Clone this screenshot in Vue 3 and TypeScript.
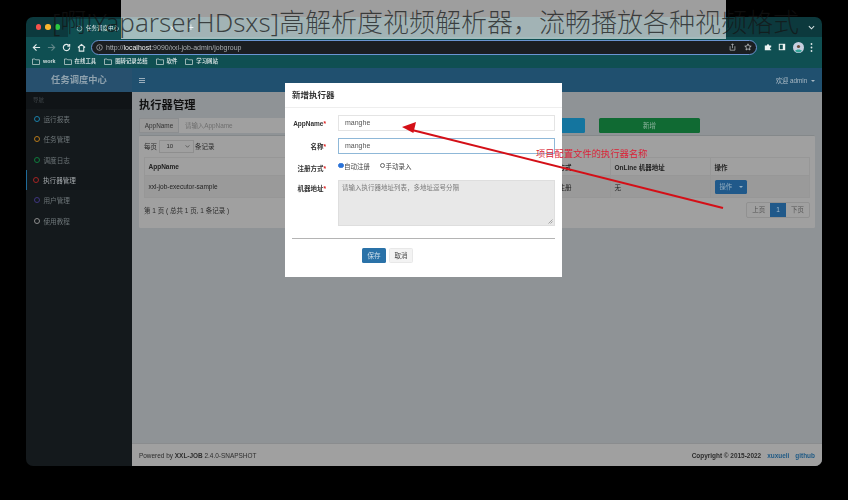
<script setup lang="ts">
const bookmarks: string[] = ['work', '在线工具', '圈转记录总结', '软件', '学习网站']
const menu: { label: string; color: string; active?: boolean }[] = [
  { label: '运行报表', color: '#1a7fa8' },
  { label: '任务管理', color: '#b5781a' },
  { label: '调度日志', color: '#0f7a3c' },
  { label: '执行器管理', color: '#a32424', active: true },
  { label: '用户管理', color: '#3e3580' },
  { label: '使用教程', color: '#8c8c8c' }
]
</script>

<template>
  <div class="page">
    <div class="window">
      <div class="tabs">
        <div class="lights">
          <i class="light red"></i><i class="light amber"></i><i class="light green"></i>
        </div>
        <div class="tab">
          <svg class="favicon" width="7" height="7" viewBox="0 0 10 10"><circle cx="5" cy="5" r="3.6" fill="none" stroke="#8fb0b0" stroke-width="1.4"/></svg>
          <span class="tab-title">任务调度中心</span>
          <span class="tab-close">×</span>
        </div>
        <span class="tab-new">+</span>
        <svg class="tab-chevron" width="7" height="5" viewBox="0 0 8 5"><path d="M1 1l3 3 3-3" fill="none" stroke="#d5e0e0" stroke-width="1.2"/></svg>
      </div>

      <div class="toolbar">
        <svg class="nav" width="9" height="9" viewBox="0 0 10 10"><path d="M9 5H2M5 1.5L1.5 5 5 8.5" fill="none" stroke="#dfe8e8" stroke-width="1.3"/></svg>
        <svg class="nav" width="9" height="9" viewBox="0 0 10 10"><path d="M1 5h7M5 1.5L8.500 5 5 8.500" fill="none" stroke="#5f8688" stroke-width="1.3"/></svg>
        <svg class="nav" width="9" height="9" viewBox="0 0 10 10"><path d="M8.500 5a3.500 3.500 0 1 1-1-2.500M8.500 1v2.500H6" fill="none" stroke="#dfe8e8" stroke-width="1.3"/></svg>
        <svg class="nav last" width="9" height="9" viewBox="0 0 10 10"><path d="M1 5l4-3.500L9 5M2.500 4.500V9h5V4.500" fill="none" stroke="#dfe8e8" stroke-width="1.2"/></svg>
        <div class="url">
          <svg width="7" height="7" viewBox="0 0 10 10"><circle cx="5" cy="5" r="4" fill="none" stroke="#b8bcbf" stroke-width="1"/><path d="M5 4.500v2.500M5 2.800v.8" stroke="#b8bcbf" stroke-width="1"/></svg>
          <span class="url-text">http://<b>localhost</b>:9090/xxl-job-admin/jobgroup</span>
          <svg class="url-end" width="7" height="8" viewBox="0 0 8 10"><path d="M1 4v5h6V4M4 6.500V1M2.500 2.500L4 1l1.500 1.500" fill="none" stroke="#b8bcbf" stroke-width=".9"/></svg>
          <svg width="8" height="8" viewBox="0 0 10 10"><path d="M5 1l1.200 2.700 2.800.3-2.100 1.900.6 2.900L5 7.300 2.500 8.800l.6-2.900L1 4l2.800-.3z" fill="none" stroke="#d5d8da" stroke-width=".9"/></svg>
        </div>
        <div class="actions">
          <svg width="8" height="8" viewBox="0 0 10 10"><path d="M1 3h2.500a1.500 1.500 0 0 1 3 0H9v2.200a1.500 1.500 0 0 0 0 3V9H1z" fill="#eef3f3"/></svg>
          <svg width="8" height="8" viewBox="0 0 10 10"><rect x="1" y="1" width="8" height="8" fill="#eef3f3"/><rect x="2.200" y="2.200" width="3.800" height="5.600" fill="#0f4f52"/></svg>
          <svg width="11" height="11" viewBox="0 0 11 11"><circle cx="5.500" cy="5.500" r="5.500" fill="#c8cfe0"/><path d="M2 9c1-2 6-2 7 0a5 5 0 0 1-7 0z" fill="#35a59a"/><circle cx="5.500" cy="4.500" r="1.600" fill="#6b4a3a"/></svg>
          <svg width="3" height="9" viewBox="0 0 3 9"><circle cx="1.500" cy="1" r=".9" fill="#dfe8e8"/><circle cx="1.500" cy="4.500" r=".9" fill="#dfe8e8"/><circle cx="1.500" cy="8" r=".9" fill="#dfe8e8"/></svg>
        </div>
      </div>

      <div class="bookmarks">
        <span v-for="b in bookmarks" :key="b" class="bookmark">
          <svg width="8" height="7" viewBox="0 0 8 7"><path d="M.5 1h2.500l.7.800h3.800v4.700H.5z" fill="none" stroke="#b9cccc" stroke-width=".8"/></svg>
          {{ b }}
        </span>
      </div>

      <div class="app">
        <aside class="sidebar">
          <div class="brand">任务调度中心</div>
          <div class="nav-title">导航</div>
          <ul class="menu">
            <li v-for="m in menu" :key="m.label" class="menu-item" :class="{ active: m.active }">
              <i class="dot" :style="{ borderColor: m.color }"></i>{{ m.label }}
            </li>
          </ul>
        </aside>

        <main class="main">
          <header class="navbar">
            <svg width="6" height="5" viewBox="0 0 6 5"><path d="M0 .5h6M0 2.500h6M0 4.500h6" stroke="#a9b9c4" stroke-width=".9"/></svg>
            <span class="welcome">欢迎 admin <i class="caret"></i></span>
          </header>

          <section class="content">
            <h1 class="title">执行器管理</h1>
            <div class="search">
              <div class="group">
                <span class="addon">AppName</span>
                <span class="field">请输入AppName</span>
              </div>
              <div class="group-spacer"></div>
              <button class="btn-search">搜索</button>
              <button class="btn-add">新增</button>
            </div>

            <div class="box">
              <div class="length">
                每页
                <span class="select">10 <svg width="5" height="3" viewBox="0 0 6 4"><path d="M.5.500L3 3 5.500.500" fill="none" stroke="#333" stroke-width=".8"/></svg></span>
                条记录
              </div>
              <table class="table">
                <colgroup>
                  <col class="c1" /><col class="c2" /><col class="c3" /><col />
                </colgroup>
                <thead>
                  <tr><th>AppName</th><th>注册方式</th><th>OnLine 机器地址</th><th>操作</th></tr>
                </thead>
                <tbody>
                  <tr>
                    <td>xxl-job-executor-sample</td>
                    <td>自动注册</td>
                    <td>无</td>
                    <td><span class="op"><span>操作</span><i class="caret"></i></span></td>
                  </tr>
                </tbody>
              </table>
              <div class="foot-row">
                <span>第 1 页 ( 总共 1 页, 1 条记录 )</span>
                <span class="pager">
                  <span>上页</span><span class="current">1</span><span>下页</span>
                </span>
              </div>
            </div>
          </section>

          <footer class="footer">
            <span>Powered by <b>XXL-JOB</b> 2.4.0-SNAPSHOT</span>
            <span class="copy"><b>Copyright © 2015-2022</b><b class="link">xuxueli</b><b class="link">github</b></span>
          </footer>
        </main>
      </div>
    </div>

    <div class="modal">
      <div class="modal-head">新增执行器</div>
      <div class="modal-body">
        <div class="row">
          <label class="lbl">AppName<em>*</em></label>
          <div class="input">manghe</div>
        </div>
        <div class="row">
          <label class="lbl">名称<em>*</em></label>
          <div class="input focus">manghe</div>
        </div>
        <div class="row radios">
          <label class="lbl">注册方式<em>*</em></label>
          <span class="radio on"></span><span class="radio-text">自动注册</span>
          <span class="radio"></span><span class="radio-text">手动录入</span>
        </div>
        <div class="row area-row">
          <label class="lbl">机器地址<em>*</em></label>
          <div class="area">请输入执行器地址列表，多地址逗号分隔
            <svg class="grip" width="5" height="5" viewBox="0 0 5 5"><path d="M.5 4.500L4.500.5M2.500 4.500l2-2" stroke="#777" stroke-width=".6"/></svg>
          </div>
        </div>
        <div class="rule"></div>
        <div class="modal-btns">
          <span class="save">保存</span>
          <span class="cancel">取消</span>
        </div>
      </div>
    </div>

    <span class="note">项目配置文件的执行器名称</span>
    <svg class="arrow" width="848" height="500" viewBox="0 0 848 500">
      <path d="M723 208L412 130" stroke="#d40f17" stroke-width="2" fill="none"/>
      <path d="M402 127l14-5-2.600 11z" fill="#d40f17"/>
    </svg>

    <div class="band"></div>
    <div class="caption">[啊!YaparserHDsxs]高解析度视频解析器，流畅播放各种视频格式</div>
  </div>
</template>

<style>
body { margin: 0; background: #000; }
</style>

<style scoped>
.page {
  position: relative;
  width: 848px;
  height: 500px;
  box-sizing: border-box;
  padding: 17px 26px 34px;
  overflow: hidden;
  background: #000;
  font-family: "Liberation Sans", "Noto Sans CJK SC", sans-serif;
}
.window {
  display: flex;
  flex-direction: column;
  height: 449px;
  border-radius: 7px;
  overflow: hidden;
  filter: blur(0.45px);
}
.tabs {
  display: flex;
  align-items: center;
  height: 20px;
  flex: none;
  background: #0c393d;
  color: #dfe8e8;
}
.lights { display: flex; gap: 4px; width: 42px; padding-left: 9.500px; box-sizing: border-box; }
.light { width: 5.500px; height: 5.500px; border-radius: 50%; }
.red { background: #f5524c; }
.amber { background: #f6b52e; }
.green { background: #2bc840; }
.tab {
  display: flex;
  align-items: center;
  align-self: flex-end;
  gap: 3px;
  width: 112px;
  height: 18px;
  box-sizing: border-box;
  padding: 0 5px 0 8px;
  background: #0f4f52;
  border-radius: 5px 5px 0 0;
  font-size: 5.500px;
}
.tab-title { flex: 1; margin-left: 0; }
.tab-close { font-size: 9px; line-height: 1; }
.tab-new { margin-left: 8px; font-size: 10px; }
.tab-chevron { margin-left: auto; margin-right: 7px; }
.toolbar {
  display: flex;
  align-items: center;
  height: 20px;
  flex: none;
  box-sizing: border-box;
  padding-left: 6px;
  background: #0f4f52;
}
.nav { margin-right: 6px; }
.nav.last { margin-right: 5px; }
.url {
  display: flex;
  align-items: center;
  gap: 3px;
  width: 666px;
  height: 15px;
  box-sizing: border-box;
  padding: 0 4px;
  background: #1b1e21;
  border: 1px solid #6a95d2;
  border-radius: 8px;
  color: #a9adb0;
  font-size: 7px;
}
.url b { color: #f0f2f3; font-weight: 400; }
.url-text { flex: 1; }
.url-end { margin-right: 5px; }
.actions { display: flex; flex: 1; align-items: center; justify-content: space-between; padding: 0 9px 0 7px; }
.bookmarks {
  display: flex;
  gap: 8px;
  height: 11px;
  flex: none;
  padding-left: 6px;
  background: #0f4f52;
  color: #d3dfdf;
  font-size: 5.400px;
  font-weight: 700;
  line-height: 7px;
}
.bookmark { display: flex; gap: 3px; height: 7px; margin-top: 1px; }
.app { display: flex; flex: 1; min-height: 0; }
.sidebar { width: 106px; flex: none; background: #14191c; }
.brand {
  height: 24px;
  background: #27506e;
  color: #8fa2ae;
  font-size: 9.300px;
  font-weight: 700;
  line-height: 24px;
  text-align: center;
}
.nav-title {
  height: 17px;
  padding-left: 7px;
  background: #101417;
  color: #40474b;
  font-size: 5.500px;
  line-height: 16px;
}
.menu { margin: 0; padding: 0; list-style: none; }
.menu-item {
  display: flex;
  align-items: center;
  gap: 4px;
  height: 20.300px;
  box-sizing: border-box;
  padding-left: 7.500px;
  color: #6e7679;
  font-size: 6.600px;
}
.menu-item.active {
  padding-left: 6px;
  border-left: 1.500px solid #1f6a98;
  background: #12171a;
  color: #a4a9ac;
}
.dot { width: 4px; height: 4px; border: 1.200px solid; border-radius: 50%; }
.main { display: flex; flex: 1; flex-direction: column; min-width: 0; background: #8f9396; }
.navbar {
  display: flex;
  align-items: center;
  justify-content: space-between;
  height: 24px;
  flex: none;
  box-sizing: border-box;
  padding: 0 7px;
  background: #20506f;
  color: #a9b9c4;
}
.welcome { font-size: 6.300px; }
.caret {
  display: inline-block;
  width: 0;
  height: 0;
  margin-left: 2px;
  vertical-align: middle;
  border-top: 2px solid currentColor;
  border-left: 2px solid transparent;
  border-right: 2px solid transparent;
}
.content { flex: 1; box-sizing: border-box; padding: 0 7px; }
.title {
  height: 26px;
  margin: 0;
  color: #111;
  font-size: 11.300px;
  font-weight: 700;
  line-height: 26px;
}
.search { display: flex; height: 15px; font-size: 6.400px; color: #444; }
.group { display: flex; width: 345px; }
.group-spacer { flex: 1; }
.addon {
  width: 40px;
  background: #9a9a9a;
  border: 1px solid #8c8e90;
  box-sizing: border-box;
  line-height: 13px;
  text-align: center;
  color: #333;
}
.field {
  flex: 1;
  padding-left: 6px;
  background: #a0a0a0;
  color: #6f6f6f;
  line-height: 15px;
}
.btn-search, .btn-add {
  width: 101px;
  height: 15px;
  padding: 0;
  border: 0;
  border-radius: 1.500px;
  font: inherit;
  color: #8fb5a0;
}
.btn-search { margin-right: 14px; background: #14759f; }
.btn-add { margin-right: 115px; background: #106a33; }
.box {
  height: 93px;
  margin-top: 2px;
  box-sizing: border-box;
  padding: 0 5px;
  background: #a0a0a0;
  border-top: 1.500px solid #84888a;
  border-radius: 1.500px;
  color: #2c2c2c;
  font-size: 6.500px;
}
.length { display: flex; align-items: center; gap: 1.500px; height: 20px; }
.select {
  display: flex;
  align-items: center;
  justify-content: space-between;
  width: 35px;
  height: 13px;
  box-sizing: border-box;
  padding: 0 3px 0 7px;
  border: 1px solid #8e8e8e;
  font-size: 6px;
}
.table {
  width: 666px;
  margin-top: 1px;
  table-layout: fixed;
  border-collapse: collapse;
  color: #222;
}
.c1 { width: 397px; }
.c2 { width: 69px; }
.c3 { width: 100px; }
.table th, .table td {
  padding: 0 3.500px;
  border: 1px solid #979797;
  text-align: left;
  white-space: nowrap;
}
.table th { height: 17px; font-weight: 700; }
.table td { height: 21px; background: #9a9a9a; }
.op {
  display: flex;
  align-items: center;
  justify-content: space-between;
  width: 32px;
  height: 14px;
  box-sizing: border-box;
  padding: 0 4px 0 5px;
  background: #20598a;
  border-radius: 1.500px;
  color: #96b0c2;
  font-size: 6.300px;
}
.foot-row { display: flex; align-items: center; justify-content: space-between; height: 24px; }
.pager {
  display: flex;
  width: 64px;
  height: 16px;
  box-sizing: border-box;
  border: 1px solid #919191;
  border-radius: 2px;
  color: #555;
  line-height: 14px;
  text-align: center;
  font-size: 6.500px;
}
.pager span { flex: 24; }
.pager .current { flex: 16; background: #20598a; color: #a8bfd0; }
.footer {
  display: flex;
  align-items: center;
  justify-content: space-between;
  height: 23px;
  flex: none;
  box-sizing: border-box;
  padding: 0 7px;
  background: #a0a0a0;
  border-top: 1px solid #8a8c8e;
  color: #2c2c2c;
  font-size: 6.450px;
}
.copy { display: flex; gap: 6px; }
.link { color: #1f5a85; }

.modal {
  position: absolute;
  left: 285px;
  top: 83px;
  width: 277px;
  height: 194px;
  background: #fff;
  filter: blur(0.4px);
  color: #333;
  font-size: 6.500px;
}
.modal-head {
  height: 25px;
  box-sizing: border-box;
  padding-left: 7px;
  border-bottom: 1px solid #eee;
  font-size: 8.500px;
  font-weight: 700;
  line-height: 24px;
}
.modal-body { padding: 7px 7px 0; }
.row { display: flex; align-items: center; height: 16px; margin-bottom: 7px; }
.lbl { width: 34px; margin-right: 12px; flex: none; text-align: right; font-weight: 700; white-space: nowrap; }
.lbl em { color: #e02020; font-style: normal; }
.input {
  width: 218px;
  height: 16px;
  box-sizing: border-box;
  padding-left: 6px;
  border: 1px solid #e4e4e4;
  font-size: 7px;
  line-height: 14px;
  color: #555;
}
.input.focus { border-color: #8fb8d8; }
.radios { height: 11px; margin-bottom: 9px; margin-top: -1px; }
.radios .lbl { padding-top: 4px; }
.radio {
  width: 5.500px;
  height: 5.500px;
  box-sizing: border-box;
  border: .8px solid #666;
  border-radius: 50%;
}
.radio.on { border: 1.500px solid #2a72d8; background: #2a72d8; }
.radio-text { margin: 0 9.500px 0 .5px; color: #444; }
.area-row { align-items: flex-start; height: 46px; margin-bottom: 0; }
.area-row .lbl { padding-top: 3px; }
.area {
  position: relative;
  width: 218px;
  height: 46px;
  box-sizing: border-box;
  padding: 1px 3px;
  background: #e8e8e8;
  border: 1px solid #dedede;
  color: #7a7a7a;
}
.grip { position: absolute; right: 1px; bottom: 1px; }
.rule { height: 1px; margin-top: 12px; background: #b4b4b4; }
.modal-btns { display: flex; gap: 3px; margin: 9px 0 0 70px; }
.save, .cancel {
  width: 24px;
  height: 15px;
  box-sizing: border-box;
  border-radius: 1.500px;
  line-height: 15px;
  text-align: center;
}
.save { background: #2a72a8; color: #cfe0ec; }
.cancel { background: #f3f3f3; border: 1px solid #e8e8e8; line-height: 13px; color: #444; }

.note {
  position: absolute;
  left: 536px;
  top: 148px;
  color: #d92638;
  font-size: 9.300px;
  line-height: 12px;
}
.arrow { position: absolute; left: 0; top: 0; pointer-events: none; }
.band {
  position: absolute;
  left: 121px;
  top: 0;
  width: 605px;
  height: 39px;
  background: rgba(255, 255, 255, 0.62);
}
.caption {
  position: absolute;
  left: 52px;
  top: 3px;
  color: rgba(20, 20, 20, 0.72);
  font-family: "Noto Sans", "Noto Sans CJK SC", sans-serif;
  font-size: 26px;
  font-weight: 300;
  line-height: 38px;
  white-space: nowrap;
}
</style>
